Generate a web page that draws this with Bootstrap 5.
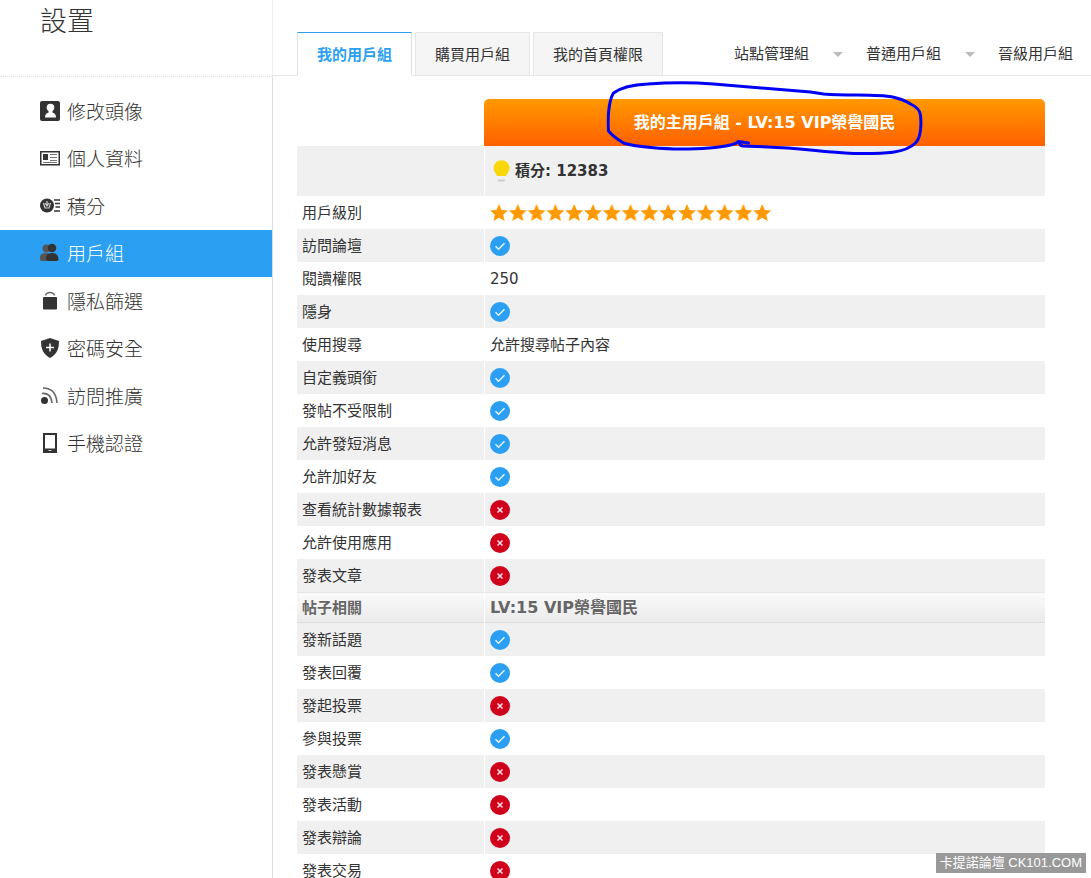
<!DOCTYPE html>
<html lang="zh-Hant">
<head>
<meta charset="utf-8">
<meta name="viewport" content="width=device-width, initial-scale=1">
<title>設置 - 用戶組</title>
<link rel="stylesheet" href="https://cdn.jsdelivr.net/npm/bootstrap@5.3.0/dist/css/bootstrap.min.css">
<style>
body{font-family:"DejaVu Sans","Noto Sans CJK TC",sans-serif;font-size:15px;line-height:20px;color:#333;background:#fff}
a{color:inherit;text-decoration:none}
.page-wrap{overflow:hidden}
.side-panel{width:272px;box-shadow:1px 0 0 #ddd}
.side-title{height:77px;border-bottom:1px dotted #ddd;padding-left:40px;box-shadow:1px 0 0 #f0f0f0}
.side-title h1{font-size:27px;line-height:40px;font-weight:300;font-family:"Noto Sans CJK TC",sans-serif}
.side-menu{margin-top:10px;height:380px;display:grid;grid-auto-rows:1fr}
.side-menu a{padding-left:40px;gap:7px;font:300 19px/28px "Noto Sans CJK TC",sans-serif}
.side-menu a.active{background:#2b9ff2;color:#fff}
.side-menu svg{width:20px;height:20px;color:#333}
.top-bar{height:76px;border-bottom:1px solid #e6e6e6;padding:0 18px 0 25px}
.top-bar .nav-tabs{gap:3px;margin-bottom:-1px}
.top-bar .nav-link{height:44px;padding:12px 19px;line-height:20px;border:1px solid #e6e6e6;border-radius:0;background:#f5f5f5;color:#333;margin:0}
.top-bar .nav-link.active{background:#fff;color:#2b9ff2;border-top-color:#2b9ff2;border-bottom-color:#fff;font-weight:700}
.group-links{height:42px;gap:23px}
.group-links a{gap:24px}
.caret-down{border:5px solid transparent;border-top-color:#bbb;border-bottom:0}
.table-area{padding:23px 46px 0 25px}
.rights{width:100%;table-layout:fixed;border-collapse:separate;border-spacing:0}
.rights th,.rights td{height:33px;padding:0 5px;font-weight:400;vertical-align:middle}
.rights tr>:nth-child(2){border-left:1px solid #fff}
.rights tbody tr:nth-child(odd)>*{background:#f0f0f0}
.rights svg{display:block}
.rights .main-group{height:47px;padding:0;color:#fff;font-size:16px;font-weight:700;text-align:center;border:0!important;border-radius:5px 5px 0 0;background:linear-gradient(#ff9900,#ff6000)}
.rights .score>*{height:50px}
.rights .sub-head>*{height:31px;font-weight:700;color:#666;background:linear-gradient(#fafafa,#ebebeb)!important;border-top:1px solid #e8e8e8;border-bottom:1px solid #ddd}
.rights .sub-head>:nth-child(2){font-size:16px}
.ink{top:-32px}
.watermark{right:5px;bottom:5px;height:20px;padding:0 4px;background:#999;color:#fff;font:13px/20px "Liberation Sans","Noto Sans CJK TC",sans-serif}
</style>
</head>
<body>
<svg class="d-none" aria-hidden="true">
<symbol id="yes" viewBox="0 0 20 20"><circle cx="10" cy="10" r="10" fill="#2b9ff2"/><path d="M5.5 10.2l3 3 6-6" fill="none" stroke="#e4f3ff" stroke-width="1.5"/></symbol>
<symbol id="no" viewBox="0 0 20 20"><circle cx="10" cy="10" r="10" fill="#d0021b"/><path d="M7.5 7.5l5 5m0-5l-5 5" stroke="#ffe4e8" stroke-width="1.5"/></symbol>
<symbol id="star" viewBox="0 0 18 18"><path d="M9 0l2.600 5.900 6.300.600-4.800 4.300 1.500 6.300L9 13.800l-5.600 3.300 1.500-6.300L.100 6.500l6.300-.600z" fill="#ff9900"/></symbol>
</svg>
<div class="page-wrap d-flex vh-100 position-relative">
<aside class="side-panel flex-shrink-0">
<div class="side-title"><h1 class="m-0">設置</h1></div>
<nav class="side-menu">
<a href="#" class="d-flex align-items-center"><svg viewBox="0 0 20 20"><rect width="20" height="20" rx="2" fill="currentColor"/><circle cx="10.500" cy="6.500" r="3.800" fill="#fff"/><path d="M8.500 9h4v3h-4z" fill="#fff"/><path d="M5 16.500c0-4 2.500-5 5.500-5s5.500 1 5.500 5z" fill="#fff"/></svg>修改頭像</a>
<a href="#" class="d-flex align-items-center"><svg viewBox="0 0 20 20"><rect x=".75" y="3.750" width="18.500" height="13" fill="#fff" stroke="currentColor" stroke-width="1.500"/><path d="M3 6h5v6H3z" fill="currentColor"/><path d="M10 6.500h7M10 9.500h7M10 12.500h7M3 14.500h14" stroke="#777" stroke-width="1"/></svg>個人資料</a>
<a href="#" class="d-flex align-items-center"><svg viewBox="0 0 20 20"><circle cx="7" cy="9.500" r="7" fill="currentColor"/><path d="M3.500 7l1.500 5h4l1.500-5M7 5v5M5 7l2 3 2-3" fill="none" stroke="#ccc" stroke-width="1.200"/><path d="M14 4h6M15 7.500h5M15.500 11h4.500M14 15h6" stroke="currentColor" stroke-width="1.600"/></svg>積分</a>
<a href="#" class="active d-flex align-items-center"><svg viewBox="0 0 20 20"><g fill="#555"><circle cx="6.500" cy="5.500" r="4"/><path d="M0 17v-3c0-3 3-4 6-4s5 2 5 7v1H1z"/></g><circle cx="12" cy="5" r="4.300" fill="#333"/><path d="M6 15c0-4 3-5 6-5s6 1 6.500 6c0 1-.5 2-1.500 2H9q-3 0-3-3z" fill="#333"/></svg>用戶組</a>
<a href="#" class="d-flex align-items-center"><svg viewBox="0 0 20 20"><path d="M5.500 4.500c1-4 8-4 9 0" fill="none" stroke="#666" stroke-width="1.500"/><rect x="3" y="6" width="14" height="12.500" rx="1" fill="currentColor"/></svg>隱私篩選</a>
<a href="#" class="d-flex align-items-center"><svg viewBox="0 0 20 20"><path d="M10 0l9 3c0 8-2 13-9 17C3 16 1 11 1 3z" fill="currentColor"/><path d="M10 5.500v8M6 9.500h8" stroke="#fff" stroke-width="1.500"/></svg>密碼安全</a>
<a href="#" class="d-flex align-items-center"><svg viewBox="0 0 20 20"><circle cx="4.500" cy="14.500" r="3.500" fill="currentColor"/><path d="M2 7.500q9-1 10 9.500M3 2q13 0 14 15" fill="none" stroke="#666" stroke-width="1.600"/></svg>訪問推廣</a>
<a href="#" class="d-flex align-items-center"><svg viewBox="0 0 20 20"><path d="M3 0h14v20H3zM5 2v13.500h10V2z" fill="currentColor" fill-rule="evenodd"/><path d="M8.500 17.500h3" stroke="#ccc"/></svg>手機認證</a>
</nav>
</aside>
<main class="flex-grow-1">
<div class="top-bar d-flex align-items-end justify-content-between">
<ul class="nav nav-tabs border-0 flex-nowrap">
<li class="nav-item"><a class="nav-link active" href="#">我的用戶組</a></li>
<li class="nav-item"><a class="nav-link" href="#">購買用戶組</a></li>
<li class="nav-item"><a class="nav-link" href="#">我的首頁權限</a></li>
</ul>
<div class="group-links d-flex align-items-center text-nowrap">
<a href="#" class="d-flex align-items-center">站點管理組<span class="caret-down"></span></a>
<a href="#" class="d-flex align-items-center">普通用戶組<span class="caret-down"></span></a>
<a href="#">晉級用戶組</a>
</div>
</div>
<div class="table-area">
<table class="rights">
<colgroup><col style="width:25%"><col></colgroup>
<thead><tr><td></td><th class="main-group"><div class="position-relative">我的主用戶組 - LV:15 VIP榮譽國民
<svg class="ink position-absolute start-50 translate-middle-x" width="317" height="75" viewBox="606 80 317 75" fill="none" stroke="#0000f5" stroke-width="3" stroke-linecap="round" stroke-linejoin="round"><path d="M748 142L738 140.500Q735 143 730 144C712 148 694 148 680 148S634 146 623 142Q613 136 608 130C607 118 608 100 613 92Q624 84 647 83C675 81 700 82 713 83C750 86 785 89 810 91L823 93C850 95 876 93 892 96Q902 98 910 103Q919 107 920 114C921 125 921 136 915 142C905 152 885 153 853 152.500C820 151 800 147 767 146L742 145Q738 144 740 141"/></svg></div></th></tr></thead>
<tbody>
<tr class="score"><td></td><td><div class="d-flex align-items-center fw-bold"><svg class="me-1" width="21" height="24" viewBox="0 0 20 24"><path d="M7 20.500h8l-1 2H8z" fill="#ccc"/><path d="M6.500 17l-1-2A8 8 0 1 1 16.500 15l-1 2z" fill="#f8d80a"/></svg>積分: 12383</div></td></tr>
<tr><th scope="row">用戶級別</th><td><svg role="img" aria-label="15 星" width="284" height="18" viewBox="0 0 284 18"><defs><pattern id="stars" width="18.800" height="18" patternUnits="userSpaceOnUse"><use href="#star" width="18" height="18"/></pattern></defs><rect width="282" height="18" fill="url(#stars)"/></svg></td></tr>
<tr><th scope="row">訪問論壇</th><td><svg width="20" height="20"><use href="#yes"/></svg></td></tr>
<tr><th scope="row">閱讀權限</th><td>250</td></tr>
<tr><th scope="row">隱身</th><td><svg width="20" height="20"><use href="#yes"/></svg></td></tr>
<tr><th scope="row">使用搜尋</th><td>允許搜尋帖子內容</td></tr>
<tr><th scope="row">自定義頭銜</th><td><svg width="20" height="20"><use href="#yes"/></svg></td></tr>
<tr><th scope="row">發帖不受限制</th><td><svg width="20" height="20"><use href="#yes"/></svg></td></tr>
<tr><th scope="row">允許發短消息</th><td><svg width="20" height="20"><use href="#yes"/></svg></td></tr>
<tr><th scope="row">允許加好友</th><td><svg width="20" height="20"><use href="#yes"/></svg></td></tr>
<tr><th scope="row">查看統計數據報表</th><td><svg width="20" height="20"><use href="#no"/></svg></td></tr>
<tr><th scope="row">允許使用應用</th><td><svg width="20" height="20"><use href="#no"/></svg></td></tr>
<tr><th scope="row">發表文章</th><td><svg width="20" height="20"><use href="#no"/></svg></td></tr>
</tbody>
<tbody>
<tr class="sub-head"><th>帖子相關</th><th>LV:15 VIP榮譽國民</th></tr>
</tbody>
<tbody>
<tr><th scope="row">發新話題</th><td><svg width="20" height="20"><use href="#yes"/></svg></td></tr>
<tr><th scope="row">發表回覆</th><td><svg width="20" height="20"><use href="#yes"/></svg></td></tr>
<tr><th scope="row">發起投票</th><td><svg width="20" height="20"><use href="#no"/></svg></td></tr>
<tr><th scope="row">參與投票</th><td><svg width="20" height="20"><use href="#yes"/></svg></td></tr>
<tr><th scope="row">發表懸賞</th><td><svg width="20" height="20"><use href="#no"/></svg></td></tr>
<tr><th scope="row">發表活動</th><td><svg width="20" height="20"><use href="#no"/></svg></td></tr>
<tr><th scope="row">發表辯論</th><td><svg width="20" height="20"><use href="#no"/></svg></td></tr>
<tr><th scope="row">發表交易</th><td><svg width="20" height="20"><use href="#no"/></svg></td></tr>
</tbody>
</table>
</div>
</main>
<div class="watermark position-absolute">卡提諾論壇 CK101.COM</div>
</div>
<script src="https://cdn.jsdelivr.net/npm/bootstrap@5.3.0/dist/js/bootstrap.bundle.min.js"></script>
</body>
</html>
